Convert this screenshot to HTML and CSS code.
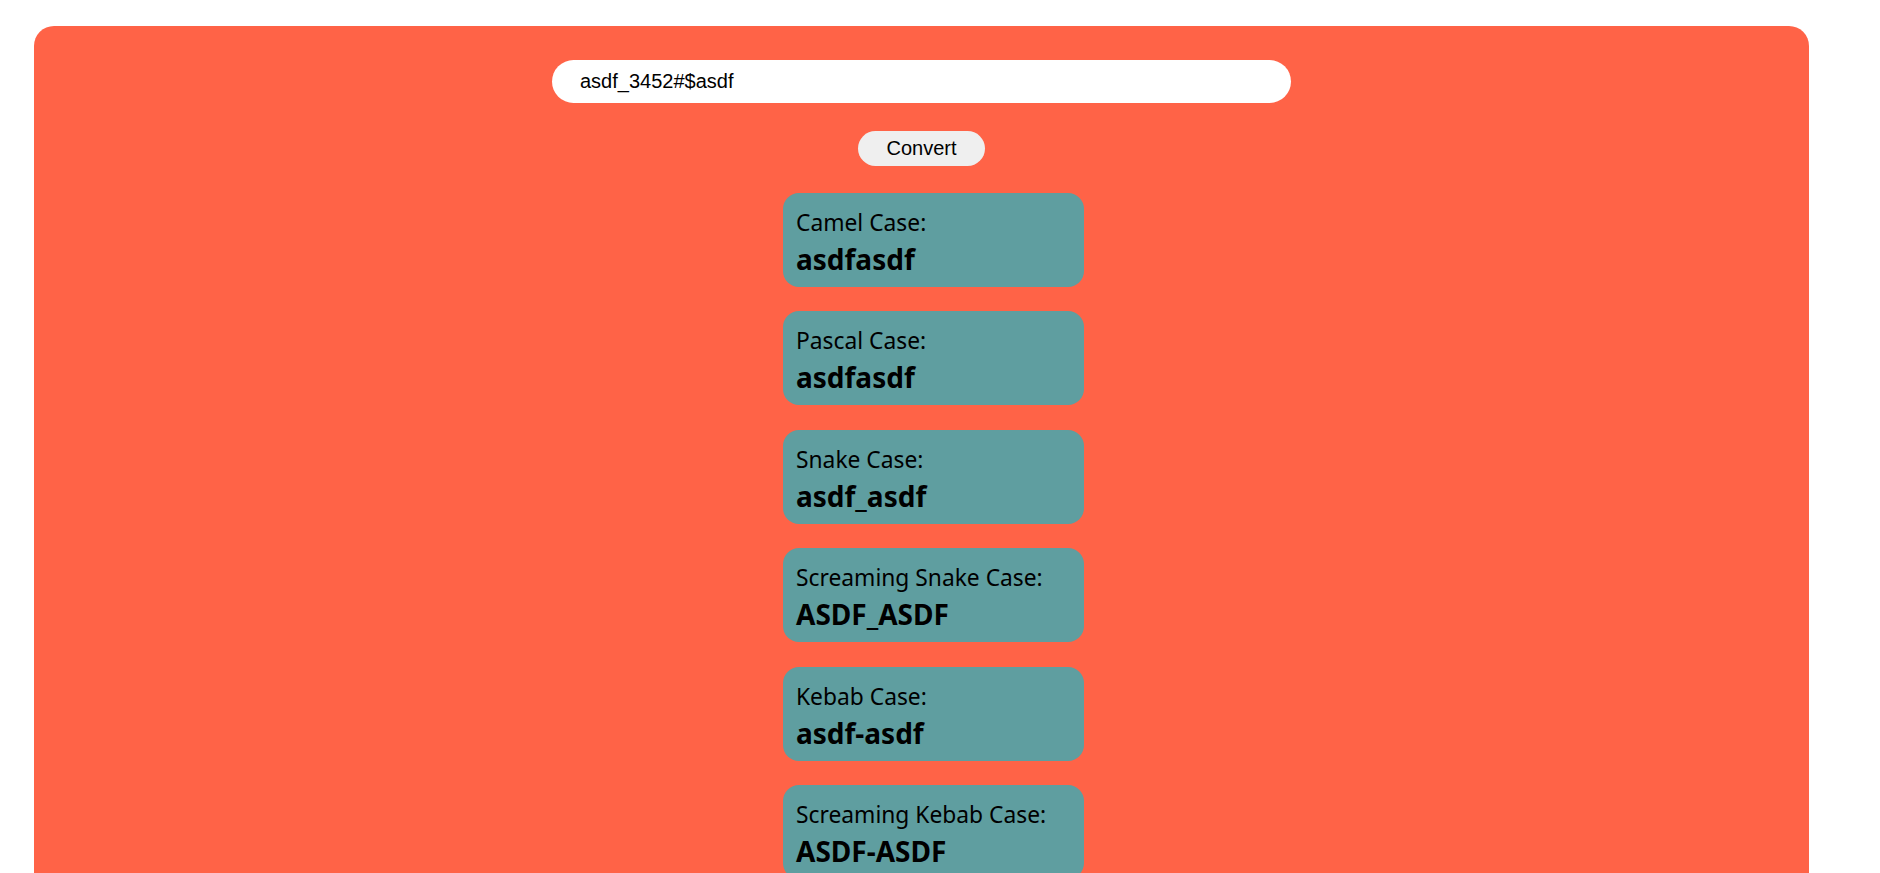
FILE: index.html
```html
<!DOCTYPE html>
<html lang="en">
<head>
<meta charset="utf-8">
<title>Case Converter</title>
<link rel="stylesheet" href="styles.css">
</head>
<body>
<main class="panel">
  <input class="source" type="text" value="asdf_3452#$asdf">
  <button class="convert" type="button">Convert</button>
  <section class="results">
    <div class="card"><div class="label">Camel Case:</div><div class="value">asdfasdf</div></div>
    <div class="card"><div class="label">Pascal Case:</div><div class="value">asdfasdf</div></div>
    <div class="card"><div class="label">Snake Case:</div><div class="value">asdf_asdf</div></div>
    <div class="card"><div class="label">Screaming Snake Case:</div><div class="value">ASDF_ASDF</div></div>
    <div class="card"><div class="label">Kebab Case:</div><div class="value">asdf-asdf</div></div>
    <div class="card"><div class="label">Screaming Kebab Case:</div><div class="value">ASDF-ASDF</div></div>
  </section>
</main>
</body>
</html>
```
FILE: styles.css
```css
html, body {
  margin: 0;
  padding: 0;
  background: #ffffff;
}

body {
  padding: 26px 0 40px 34px;
  font-family: "Liberation Sans", Arial, sans-serif;
}

.panel {
  width: 1775px;
  box-sizing: border-box;
  background: #ff6347;
  border-radius: 20px;
  padding: 34px 0 60px;
  display: flex;
  flex-direction: column;
  align-items: center;
}

.source {
  width: 739px;
  height: 43px;
  box-sizing: border-box;
  border: none;
  outline: none;
  border-radius: 22px;
  background: #ffffff;
  padding: 0 28px;
  font-family: "Liberation Sans", Arial, sans-serif;
  font-size: 20px;
  color: #000000;
}

.convert {
  margin-top: 28px;
  width: 127px;
  height: 35px;
  border: none;
  border-radius: 18px;
  background: #efefef;
  font-family: "Liberation Sans", Arial, sans-serif;
  font-size: 20px;
  color: #000000;
  padding: 0;
}

.results {
  margin-top: 27px;
  display: flex;
  flex-direction: column;
  gap: 24.4px;
  margin-left: 24px;
}

.card {
  width: 301px;
  height: 94px;
  box-sizing: border-box;
  background: #5f9ea0;
  border-radius: 16px;
  padding: 13px 13px 0;
  font-family: "Noto Sans", "Open Sans", sans-serif;
  color: #000000;
}

.label {
  font-size: 22.8px;
  line-height: 34px;
}

.value {
  font-size: 28px;
  font-weight: 700;
  line-height: 38px;
}
```
